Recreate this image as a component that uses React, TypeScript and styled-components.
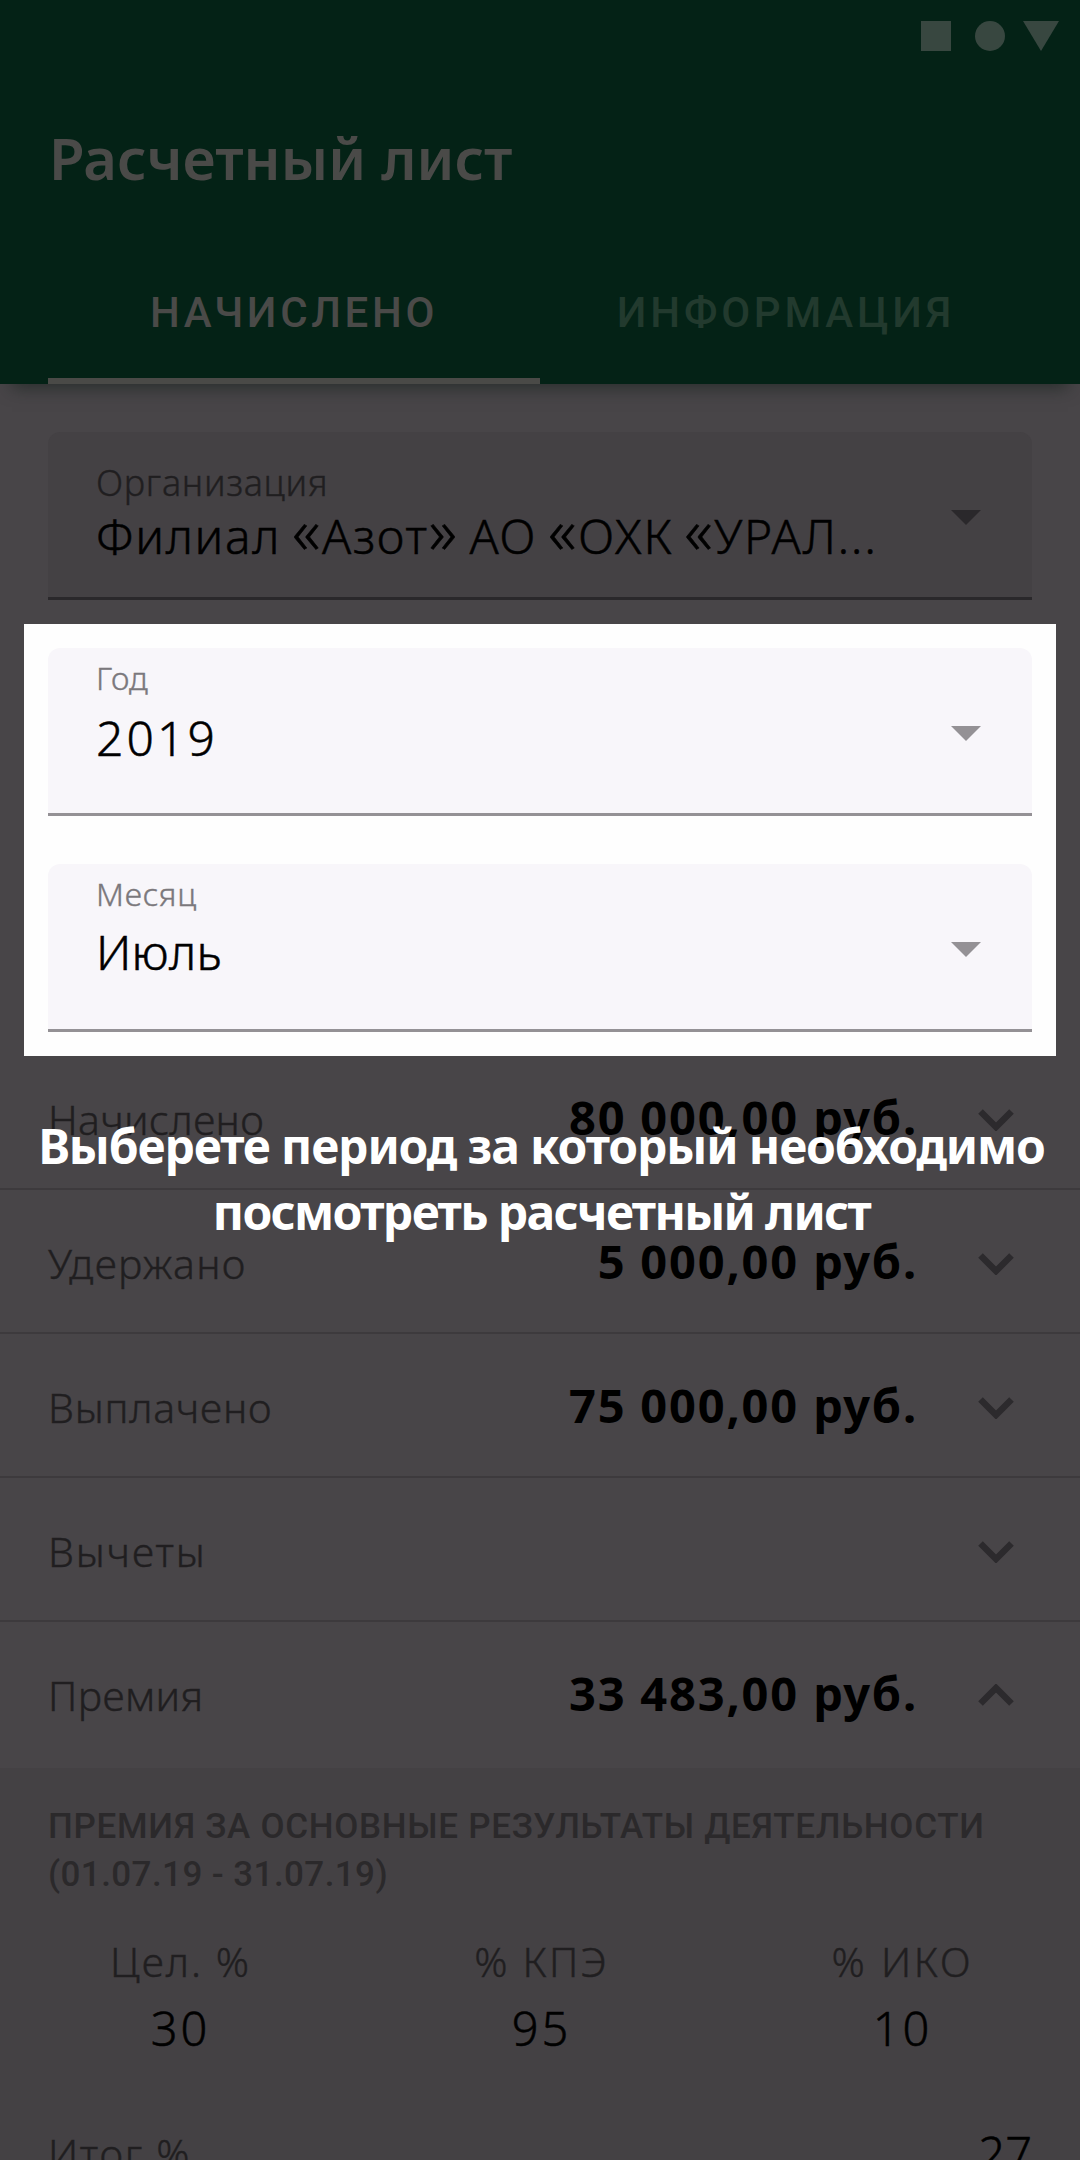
import React from 'react';
import styled, { createGlobalStyle } from 'styled-components';

const GlobalStyle = createGlobalStyle`
  * { box-sizing: border-box; }
  body { margin: 0; background: #484548; }
`;

const sans = '"Noto Sans", "Open Sans", sans-serif';
const roboto = 'Roboto, "Noto Sans", sans-serif';

interface Tracked { $track?: number }

const Screen = styled.div`
  position: relative;
  display: flex;
  flex-direction: column;
  width: 1080px;
  height: 2160px;
  overflow: hidden;
  background: #484548;
  font-family: ${sans};
  font-weight: 300;
  white-space: nowrap;
`;

const Header = styled.header`
  flex: none;
  height: 384px;
  background: #042216;
  box-shadow: 0 16px 16px -12px rgba(20, 32, 26, 0.6);
`;

const StatusBar = styled.div`
  display: flex;
  justify-content: flex-end;
  height: 72px;
  padding: 21px 21px 0 0;
`;

const Title = styled.h1`
  display: flex;
  align-items: center;
  height: 168px;
  margin: 0;
  padding: 3px 49px 0;
  color: #4a4a48;
  font-size: 58px;
  font-weight: 600;
`;

const Tabs = styled.nav`
  display: grid;
  grid-template-columns: 1fr 1fr;
  height: 144px;
  padding: 0 48px;
`;

const Tab = styled.div<{ $active?: boolean } & Tracked>`
  display: flex;
  align-items: center;
  justify-content: center;
  padding-top: 6px;
  border-bottom: 6px solid ${(p) => (p.$active ? '#4a4a47' : 'transparent')};
  color: ${(p) => (p.$active ? '#4a4a48' : '#223a2e')};
  font-family: ${roboto};
  font-size: 42px;
  font-weight: 500;
  letter-spacing: ${(p) => p.$track}px;
`;

const FilterArea = styled.section`
  flex: none;
  padding: 48px 48px 24px;
`;

const Spotlight = styled.section`
  flex: none;
  display: flex;
  flex-direction: column;
  gap: 48px;
  height: 432px;
  margin: 0 24px;
  padding: 24px;
  background: #fefefe;
`;

const Field = styled.div<{ $lit?: boolean }>`
  display: flex;
  justify-content: space-between;
  height: 168px;
  padding: 0 51px 0 48px;
  border-bottom: 3px solid ${(p) => (p.$lit ? '#949195' : '#2a282b')};
  border-radius: 12px 12px 0 0;
  background: ${(p) => (p.$lit ? '#f8f6fa' : '#444144')};
  color: ${(p) => (p.$lit ? '#949195' : '#2a282b')};
`;

const FieldText = styled.div<{ $top: number; $gap: number }>`
  display: flex;
  flex-direction: column;
  gap: ${(p) => p.$gap}px;
  padding-top: ${(p) => p.$top}px;
`;

const FieldLabel = styled.span<{ $lit?: boolean } & Tracked>`
  color: ${(p) => (p.$lit ? '#7b787c' : '#201e20')};
  font-size: ${(p) => (p.$lit ? 32 : 36)}px;
  line-height: ${(p) => (p.$lit ? 44 : 46)}px;
  letter-spacing: ${(p) => p.$track}px;
  -webkit-text-stroke: 0.4px currentColor;
`;

const FieldValue = styled.span<Tracked>`
  height: 60px;
  color: #000;
  font-size: 48px;
  line-height: 60px;
  letter-spacing: ${(p) => p.$track}px;
  word-spacing: -3px;
  -webkit-text-stroke: 0.5px currentColor;
`;

const Quote = styled.span`
  font-size: 1.3em;
  line-height: 0;
`;

const Caret = styled.svg`
  flex: none;
  width: 30px;
  height: 15px;
  margin-top: 78px;
`;

const List = styled.section`
  flex: none;
  margin-top: -10px;
`;

const Row = styled.div<{ $open?: boolean }>`
  display: flex;
  align-items: center;
  height: ${(p) => (p.$open ? 146 : 144)}px;
  padding: 0 66px ${(p) => (p.$open ? 4 : 0)}px 48px;
  border-bottom: ${(p) => (p.$open ? 'none' : '2px solid #3d3a3d')};
`;

const RowLabel = styled.span<Tracked>`
  flex: 1;
  padding-top: 3px;
  color: #201e20;
  font-size: 41px;
  letter-spacing: ${(p) => p.$track}px;
  -webkit-text-stroke: 0.4px currentColor;
`;

const Amount = styled.span`
  margin-right: 60px;
  padding-bottom: 1px;
  color: #000;
  font-size: 47px;
  font-weight: 700;
  letter-spacing: 1.8px;
`;

const Chevron = styled.svg<{ $up?: boolean }>`
  flex: none;
  width: 36px;
  height: 22px;
  margin-top: ${(p) => (p.$up ? 3 : 5)}px;
  transform: ${(p) => (p.$up ? 'rotate(180deg)' : 'none')};
`;

const Details = styled.section`
  flex: 1;
  padding: 35px 48px 0;
  background: #444144;
`;

const DetailsTitle = styled.h2`
  display: flex;
  flex-direction: column;
  margin: 0;
  color: #2b292b;
  font-family: ${roboto};
  font-size: 35px;
  font-weight: 500;
  line-height: 48px;
`;

const TrackedLine = styled.span<Tracked>`
  letter-spacing: ${(p) => p.$track}px;
`;

const Metrics = styled.div`
  display: grid;
  grid-template-columns: repeat(3, 1fr);
  gap: 102px;
  margin-top: 37px;
  padding-left: 3px;
`;

const Metric = styled.div`
  display: flex;
  flex-direction: column;
  align-items: center;
  gap: 12px;
`;

const MetricLabel = styled.span<Tracked>`
  color: #201e20;
  font-size: 41px;
  line-height: 50px;
  letter-spacing: ${(p) => p.$track}px;
  -webkit-text-stroke: 0.4px currentColor;
`;

const MetricValue = styled.span<Tracked>`
  color: #000;
  font-size: 47px;
  line-height: 60px;
  letter-spacing: ${(p) => p.$track}px;
  -webkit-text-stroke: 0.5px currentColor;
`;

const Total = styled.div`
  display: flex;
  justify-content: space-between;
  align-items: center;
  margin-top: 65px;
`;

const CoachText = styled.p`
  position: absolute;
  top: 1113px;
  left: 0;
  display: flex;
  flex-direction: column;
  align-items: center;
  width: 100%;
  margin: 0;
  padding-left: 3px;
  color: #fff;
  font-size: 48px;
  font-weight: 700;
  line-height: 66px;
`;

interface SelectProps {
  label: string; value: string; lit?: boolean;
  top: number; gap: number; labelTrack: number; valueTrack: number;
}

function Select({ label, value, lit, top, gap, labelTrack, valueTrack }: SelectProps) {
  return (
    <Field $lit={lit}>
      <FieldText $top={top} $gap={gap}>
        <FieldLabel $lit={lit} $track={labelTrack}>{label}</FieldLabel>
        <FieldValue $track={valueTrack}>
          {value.split(/([«»])/).map((part, i) => (/[«»]/.test(part) ? <Quote key={i}>{part}</Quote> : part))}
        </FieldValue>
      </FieldText>
      <Caret viewBox="0 0 30 15"><path d="M0 0h30L15 15z" fill="currentColor" /></Caret>
    </Field>
  );
}

const rows = [
  { label: 'Начислено', amount: '80 000,00 руб.', track: 0.4 },
  { label: 'Удержано', amount: '5 000,00 руб.', track: 1.3 },
  { label: 'Выплачено', amount: '75 000,00 руб.', track: 0.8 },
  { label: 'Вычеты', amount: '', track: 1.9 },
  { label: 'Премия', amount: '33 483,00 руб.', track: 0.4, open: true },
];

const metrics = [
  { label: 'Цел. %', value: '30', track: 2 },
  { label: '% КПЭ', value: '95', track: 2.2 },
  { label: '% ИКО', value: '10', track: 2.7 },
];

export default function App() {
  return (
    <Screen>
      <GlobalStyle />
      <Header>
        <StatusBar>
          <svg width="138" height="30" viewBox="0 0 138 30" fill="#384740">
            <rect width="30" height="30" />
            <circle cx="69" cy="15" r="15" />
            <path d="M102 0h36L120 30z" />
          </svg>
        </StatusBar>
        <Title>Расчетный лист</Title>
        <Tabs>
          <Tab $active $track={3.65}>НАЧИСЛЕНО</Tab>
          <Tab $track={3.8}>ИНФОРМАЦИЯ</Tab>
        </Tabs>
      </Header>
      <FilterArea>
        <Select label="Организация" value="Филиал «Азот» АО «ОХК «УРАЛ..." top={28} gap={-1} labelTrack={0.7} valueTrack={1.65} />
      </FilterArea>
      <Spotlight>
        <Select lit label="Год" value="2019" top={8} gap={8} labelTrack={0} valueTrack={3.1} />
        <Select lit label="Месяц" value="Июль" top={8} gap={6} labelTrack={0.8} valueTrack={0.3} />
      </Spotlight>
      <List>
        {rows.map((r) => (
          <Row key={r.label} $open={r.open}>
            <RowLabel $track={r.track}>{r.label}</RowLabel>
            {r.amount && <Amount>{r.amount}</Amount>}
            <Chevron $up={r.open} viewBox="0 0 36 22">
              <path d="M2.5 2.5 18 18 33.5 2.5" fill="none" stroke="#2c2a2d" strokeWidth="6.5" />
            </Chevron>
          </Row>
        ))}
      </List>
      <Details>
        <DetailsTitle>
          <TrackedLine $track={0.68}>ПРЕМИЯ ЗА ОСНОВНЫЕ РЕЗУЛЬТАТЫ ДЕЯТЕЛЬНОСТИ</TrackedLine>
          <TrackedLine $track={0.42}>(01.07.19 - 31.07.19)</TrackedLine>
        </DetailsTitle>
        <Metrics>
          {metrics.map((m) => (
            <Metric key={m.label}>
              <MetricLabel $track={m.track}>{m.label}</MetricLabel>
              <MetricValue $track={3}>{m.value}</MetricValue>
            </Metric>
          ))}
        </Metrics>
        <Total>
          <MetricLabel $track={1.7}>Итог %</MetricLabel>
          <MetricValue $track={0}>27</MetricValue>
        </Total>
      </Details>
      <CoachText>
        <TrackedLine $track={-1.13}>Выберете период за который необходимо</TrackedLine>
        <TrackedLine $track={-1.65}>посмотреть расчетный лист</TrackedLine>
      </CoachText>
    </Screen>
  );
}
